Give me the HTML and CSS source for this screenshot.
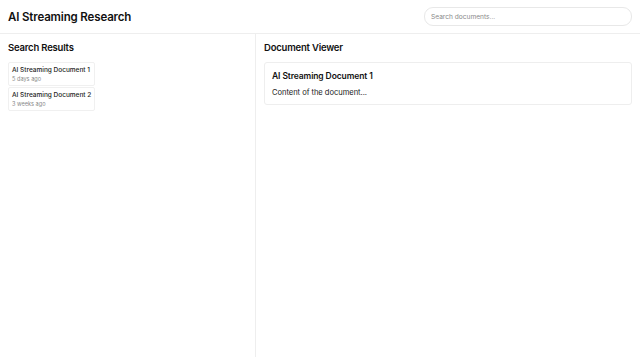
FILE: index.html
```html
<!DOCTYPE html>
<html>
<head>
<meta charset="utf-8">
<link rel="stylesheet" href="styles.css">
</head>
<body>
<header class="header">
  <h1 class="title">AI Streaming Research</h1>
  <input class="search" type="text" placeholder="Search documents...">
</header>
<main class="main">
  <section class="results">
    <h2 class="section-title">Search Results</h2>
    <ul class="result-list">
      <li class="result-card">
        <div class="result-name">AI Streaming Document 1</div>
        <div class="result-date">5 days ago</div>
      </li>
      <li class="result-card">
        <div class="result-name">AI Streaming Document 2</div>
        <div class="result-date">3 weeks ago</div>
      </li>
    </ul>
  </section>
  <section class="viewer">
    <h2 class="section-title">Document Viewer</h2>
    <article class="doc-card">
      <h3 class="doc-title">AI Streaming Document 1</h3>
      <p class="doc-content">Content of the document...</p>
    </article>
  </section>
</main>
</body>
</html>
```
FILE: styles.css
```css
* { box-sizing: border-box; }
html, body { margin: 0; padding: 0; height: 100%; }
body {
  font-family: Inter, "Noto Sans", sans-serif;
  color: #111;
  background: #fff;
  display: flex;
  flex-direction: column;
}
.header {
  height: 34px;
  border-bottom: 1px solid #eeeeee;
  display: flex;
  align-items: center;
  justify-content: space-between;
  padding: 0 8px;
  flex-shrink: 0;
}
.title {
  margin: 0;
  font-size: 11.5px;
  font-weight: 600;
  letter-spacing: -0.15px;
}
.search {
  width: 208px;
  height: 19px;
  border: 1px solid #e8e8e8;
  border-radius: 9px;
  padding: 0 6px;
  font-family: inherit;
  font-size: 6.6px;
  color: #333;
  outline: none;
}
.search::placeholder { color: #8a8a8a; }
.main {
  flex: 1;
  display: flex;
}
.results {
  width: 256px;
  border-right: 1px solid #eeeeee;
  padding: 7px 8px;
}
.viewer {
  flex: 1;
  padding: 7px 8px;
}
.section-title {
  margin: 0 0 8px 0;
  font-size: 9.5px;
  font-weight: 600;
  line-height: 13px;
  letter-spacing: -0.2px;
}
.result-list {
  list-style: none;
  margin: 0;
  padding: 0;
  display: flex;
  flex-direction: column;
  align-items: flex-start;
  gap: 1px;
}
.result-card {
  border: 1px solid #f0f0f0;
  border-radius: 2px;
  padding: 3px 3px;
  height: 24px;
  width: 87px;
}
.result-name {
  font-size: 6.5px;
  font-weight: 500;
  line-height: 9px;
  white-space: nowrap;
  color: #222;
}
.result-date {
  font-size: 5.6px;
  line-height: 8px;
  color: #8a8a8a;
}
.doc-card {
  border: 1px solid #eeeeee;
  border-radius: 3px;
  padding: 7px 7px;
  height: 43px;
}
.doc-title {
  margin: 0 0 5px 0;
  font-size: 8.5px;
  font-weight: 600;
  line-height: 12px;
  letter-spacing: -0.1px;
}
.doc-content {
  margin: 0;
  font-size: 7.6px;
  line-height: 11px;
  color: #222;
  letter-spacing: -0.05px;
}
```
